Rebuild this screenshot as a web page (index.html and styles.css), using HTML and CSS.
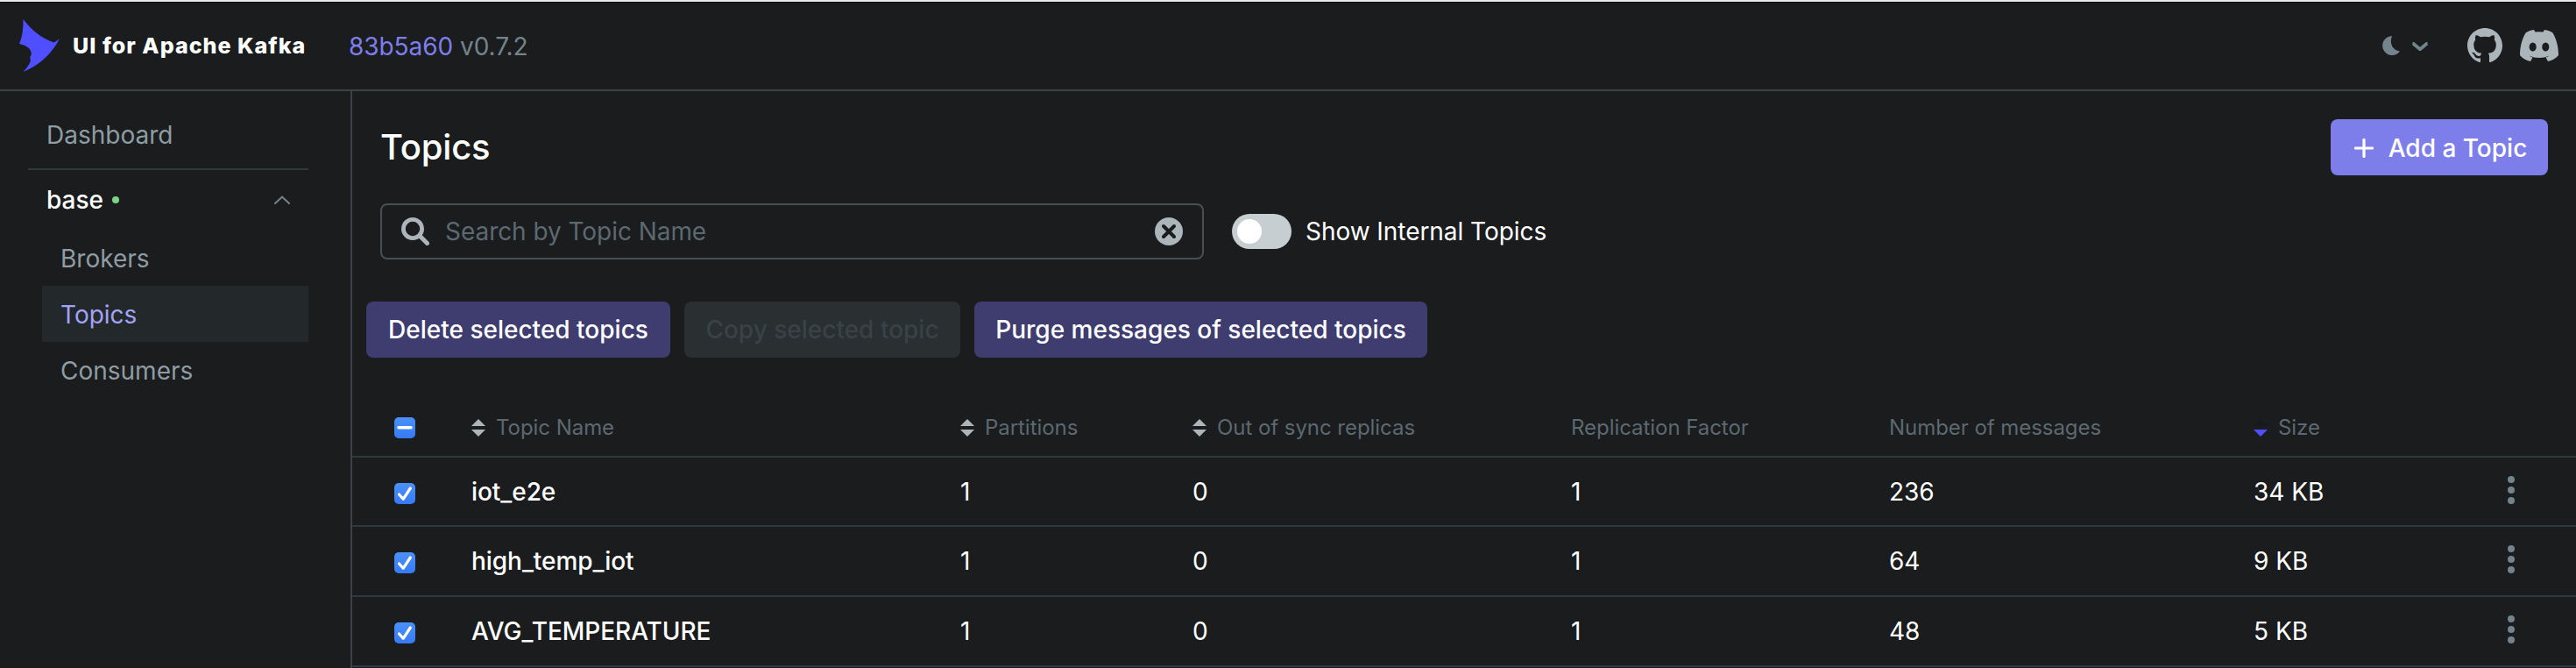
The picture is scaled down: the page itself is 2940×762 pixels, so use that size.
FILE: index.html
```html
<!DOCTYPE html>
<html lang="en">
<head>
<meta charset="utf-8">
<title>UI for Apache Kafka</title>
<link rel="stylesheet" href="styles.css">
</head>
<body>
<svg class="defs" width="0" height="0">
  <symbol id="sort" viewBox="0 0 16 20"><path d="M0 8 8 0l8 8zM0 12h16l-8 8z"/></symbol>
  <symbol id="check" viewBox="0 0 24 24"><path d="M5.500 13 10.200 18.300 18.300 6" fill="none" stroke="#fff" stroke-width="3.200" stroke-linecap="round" stroke-linejoin="round"/></symbol>
  <symbol id="dots" viewBox="0 0 8 32"><circle cx="4" cy="4" r="4"/><circle cx="4" cy="16" r="4"/><circle cx="4" cy="28" r="4"/></symbol>
</svg>
<header class="navbar">
  <svg class="logo" viewBox="0 0 46 60"><path d="M4.500 0C14 12.500 26 22 39.500 26.500Q42 25.500 46 22C38 38 24 52 4.500 60Q12 51.500 13 47L12.200 43.500L13.700 40.500C14.500 35 10 30 0 28C4 19 4.500 10 4.500 0Z"/></svg>
  <span class="brand">UI for Apache Kafka</span>
  <span class="version"><a class="commit">83b5a60</a> v0.7.2</span>
  <div class="tools">
    <svg class="moon" viewBox="0 0 20 22"><path d="M11 0A11 11 0 1 0 20 17.500C12.500 17 7.500 9 11 0Z"/></svg>
    <svg class="caret" viewBox="0 0 20 10"><path d="M1.500 1.500H2L10 8.200L18 1.500h.5" fill="none" stroke="#73848c" stroke-width="3.800"/></svg>
    <svg class="github" viewBox="0 0 16 16"><path d="M8 0C3.580 0 0 3.580 0 8c0 3.540 2.290 6.530 5.470 7.590.4.070.55-.17.55-.38 0-.19-.01-.82-.01-1.490-2.010.37-2.530-.49-2.690-.94-.09-.23-.48-.94-.82-1.130-.28-.15-.68-.52-.01-.53.63-.01 1.080.58 1.230.82.72 1.210 1.870.87 2.330.66.07-.52.28-.87.51-1.070-1.780-.2-3.640-.89-3.640-3.950 0-.87.31-1.590.82-2.150-.08-.2-.36-1.020.08-2.120 0 0 .67-.21 2.200.82.64-.18 1.320-.27 2-.27s1.360.09 2 .27c1.530-1.040 2.200-.82 2.200-.82.44 1.100.16 1.920.08 2.120.51.56.82 1.270.82 2.150 0 3.070-1.870 3.750-3.650 3.950.29.25.54.73.54 1.480 0 1.070-.01 1.930-.01 2.200 0 .21.15.46.55.38A8.010 8.010 0 0 0 16 8c0-4.420-3.580-8-8-8z"/></svg>
    <svg class="discord" viewBox="0 0 44 36"><path fill-rule="evenodd" d="M16 0C12 .7 9 1.600 6.500 3.500C2 11 0 20 0 29C3 32.500 7 35 12 36L14.500 31.500Q12.500 31 10.500 29.500Q22 34.500 33.500 29.500Q31.500 31 29.500 31.500L32 36C37 35 41 32.500 44 29C44 20 42 11 37.500 3.500C35 1.600 32 .7 28 0L26.500 2.500Q22 2 17.500 2.500ZM14.700 14.500C17 14.500 18.700 16.700 18.700 19.500S17 24.500 14.700 24.500S10.700 22.300 10.700 19.500S12.400 14.500 14.700 14.500ZM29.300 14.500C31.600 14.500 33.300 16.700 33.300 19.500S31.600 24.500 29.300 24.500S25.300 22.300 25.300 19.500S27 14.500 29.300 14.500Z"/></svg>
  </div>
</header>
<div class="layout">
  <nav class="sidebar">
    <a class="item top">Dashboard</a>
    <div class="rule"></div>
    <div class="cluster"><span>base</span><i class="status"></i>
      <svg class="chev" viewBox="0 0 18 10"><path d="M1 9l8-7.500L17 9" fill="none" stroke="#73848c" stroke-width="2" stroke-linecap="round"/></svg>
    </div>
    <a class="item sub">Brokers</a>
    <a class="item sub active">Topics</a>
    <a class="item sub">Consumers</a>
  </nav>
  <main class="main">
    <div class="heading">
      <h1>Topics</h1>
      <button class="btn primary"><svg class="plus" viewBox="0 0 22 22"><path d="M11 1.500v19M1.500 11h19" stroke="#fff" stroke-width="3.200" stroke-linecap="round"/></svg>Add a Topic</button>
    </div>
    <div class="filters">
      <div class="search">
        <svg class="lens" viewBox="0 0 32 32"><circle cx="13" cy="13" r="10.600" fill="none" stroke="#abb5ba" stroke-width="4.800"/><path d="M21 21l8.500 8.500" stroke="#abb5ba" stroke-width="5" stroke-linecap="round"/></svg>
        <span class="placeholder">Search by Topic Name</span>
        <svg class="clear" viewBox="0 0 32 32"><circle cx="16" cy="16" r="16" fill="#abb5ba"/><path d="M10 10l12 12M22 10 10 22" stroke="#1a1c1e" stroke-width="4" stroke-linecap="round"/></svg>
      </div>
      <span class="toggle"><i></i></span>
      <span class="toggle-label">Show Internal Topics</span>
    </div>
    <div class="actions">
      <button class="btn secondary b1">Delete selected topics</button>
      <button class="btn disabled b2">Copy selected topic</button>
      <button class="btn secondary b3">Purge messages of selected topics</button>
    </div>
    <div class="table">
      <div class="row head">
        <span class="box"><svg viewBox="0 0 24 24"><path d="M5 11.700h14" stroke="#fff" stroke-width="3.600" stroke-linecap="round"/></svg></span>
        <span class="th"><svg class="sort"><use href="#sort"/></svg>Topic Name</span>
        <span class="th"><svg class="sort"><use href="#sort"/></svg>Partitions</span>
        <span class="th"><svg class="sort"><use href="#sort"/></svg>Out of sync replicas</span>
        <span class="th">Replication Factor</span>
        <span class="th">Number of messages</span>
        <span class="th"><svg class="sort" viewBox="0 0 16 20"><path d="M0 8 8 0l8 8z" fill="#171a1c"/><path d="M0 12h16l-8 8z" fill="#4f4fff"/></svg>Size</span>
        <span></span>
      </div>
      <div class="row first">
        <span class="box"><svg><use href="#check"/></svg></span><b>iot_e2e</b><span>1</span><span>0</span><span>1</span><span>236</span><span>34 KB</span><svg class="dots"><use href="#dots"/></svg>
      </div>
      <div class="row">
        <span class="box"><svg><use href="#check"/></svg></span><b>high_temp_iot</b><span>1</span><span>0</span><span>1</span><span>64</span><span>9 KB</span><svg class="dots"><use href="#dots"/></svg>
      </div>
      <div class="row">
        <span class="box"><svg><use href="#check"/></svg></span><b>AVG_TEMPERATURE</b><span>1</span><span>0</span><span>1</span><span>48</span><span>5 KB</span><svg class="dots"><use href="#dots"/></svg>
      </div>
    </div>
  </main>
</div>
</body>
</html>
```
FILE: styles.css
```css
* { box-sizing: border-box; }
body {
  margin: 0;
  width: 2940px;
  height: 762px;
  overflow: hidden;
  background: #1a1c1e;
  color: #fff;
  font: 400 28px/40px Inter, sans-serif;
  white-space: nowrap;
}
svg { display: block; flex: none; }
.defs { position: absolute; }

.navbar {
  display: flex;
  align-items: center;
  height: 104px;
  padding: 0 20px 0 22px;
  border-top: 2px solid #e6eaed;
  border-bottom: 2px solid #394246;
  box-shadow: inset 0 1px #000;
}
.logo { width: 46px; height: 60px; fill: #4f4fff; }
.brand { margin: 0 0 0 15px; width: 315px; font-size: 25px; font-weight: 800; letter-spacing: 1.05px; }
.version { color: #73848c; padding-top: 2px; letter-spacing: -.05px; }
.commit { color: #7e7eeb; }
.tools { display: flex; align-items: center; margin-left: auto; }
.moon { width: 20px; height: 22px; fill: #73848c; margin-right: 13px; }
.caret { width: 20px; height: 10px; margin: 2px 44px 0 0; }
.github { width: 40px; height: 40px; fill: #abb5ba; margin-right: 20px; }
.discord { width: 44px; height: 36px; fill: #abb5ba; }

.layout { display: flex; height: 658px; }
.sidebar {
  width: 402px;
  border-right: 2px solid #394246;
  padding: 18px 48px 0 32px;
}
.item { display: flex; align-items: center; height: 64px; color: #8f9ca3; }
.top { padding: 0 0 6px 21px; height: 70px; }
.rule { height: 2px; background: #2f383d; }
.cluster { display: flex; align-items: center; height: 68px; padding: 0 21px; font-weight: 500; }
.status { width: 8px; height: 8px; margin-left: 10px; border-radius: 50%; background: #7dd489; }
.chev { width: 18px; height: 10px; margin-left: auto; }
.sub { margin-left: 16px; padding: 2px 0 0 21px; }
.active { background: #23282b; color: #a3a3f5; }

.main { flex: 1; }
.heading { display: flex; justify-content: space-between; height: 96px; padding: 32px 32px 0; }
h1 { margin: 0; font-size: 40px; line-height: 64px; font-weight: 500; letter-spacing: -.2px; }
.btn {
  display: flex;
  align-items: center;
  justify-content: center;
  height: 64px;
  padding: 0;
  border: 0;
  border-radius: 8px;
  color: #fff;
  font: 500 28px/40px Inter, sans-serif;
}
.primary { width: 248px; background: #7e7eeb; gap: 17px; padding: 1px 0 0 3px; }
.plus { width: 22px; height: 22px; }
.filters { display: flex; align-items: center; height: 64px; margin: 32px 0 0 32px; }
.search {
  display: flex;
  align-items: center;
  width: 940px;
  height: 64px;
  padding: 0 22px;
  border: 2px solid #454f54;
  border-radius: 8px;
}
.lens, .clear { width: 32px; height: 32px; }
.placeholder { margin-left: 18px; color: #5c6970; letter-spacing: -.05px; }
.clear { margin-left: auto; }
.toggle { width: 68px; height: 40px; margin: 0 16px 0 32px; padding: 6px; border-radius: 20px; background: #c7ced1; }
.toggle i { display: block; width: 28px; height: 28px; border-radius: 50%; background: #fff; }
.toggle-label { letter-spacing: -.05px; }
.actions { display: flex; gap: 16px; margin: 48px 0 0 16px; }
.secondary { background: #3f3d70; }
.disabled { background: #2a2f31; color: #394246; }
.b1 { width: 347px; }
.b2 { width: 315px; }
.b3 { width: 517px; }

.table { margin-top: 48px; }
.row {
  display: grid;
  grid-template-columns: 88px 558px 265px 432px 363px 416px 290px 1fr;
  align-items: center;
  height: 80px;
  padding-left: 48px;
  border-bottom: 2px solid #2f383d;
}
.row b { font-weight: 500; letter-spacing: -.05px; }
.head { height: 66px; }
.first { height: 79px; }
.th { display: flex; align-items: center; gap: 12px; font-size: 24px; line-height: 36px; margin-top: -1px; color: #5c6970; letter-spacing: -.05px; }
.sort { width: 16px; height: 20px; fill: #abb5ba; }
.box { width: 24px; height: 24px; margin-top: 4px; border-radius: 5px; background: linear-gradient(#4b91f7, #367af6); }
.head .box { margin-top: 0; }
.box svg { width: 24px; height: 24px; }
.dots { width: 8px; height: 32px; fill: #73848c; margin-bottom: 4px; }
```
